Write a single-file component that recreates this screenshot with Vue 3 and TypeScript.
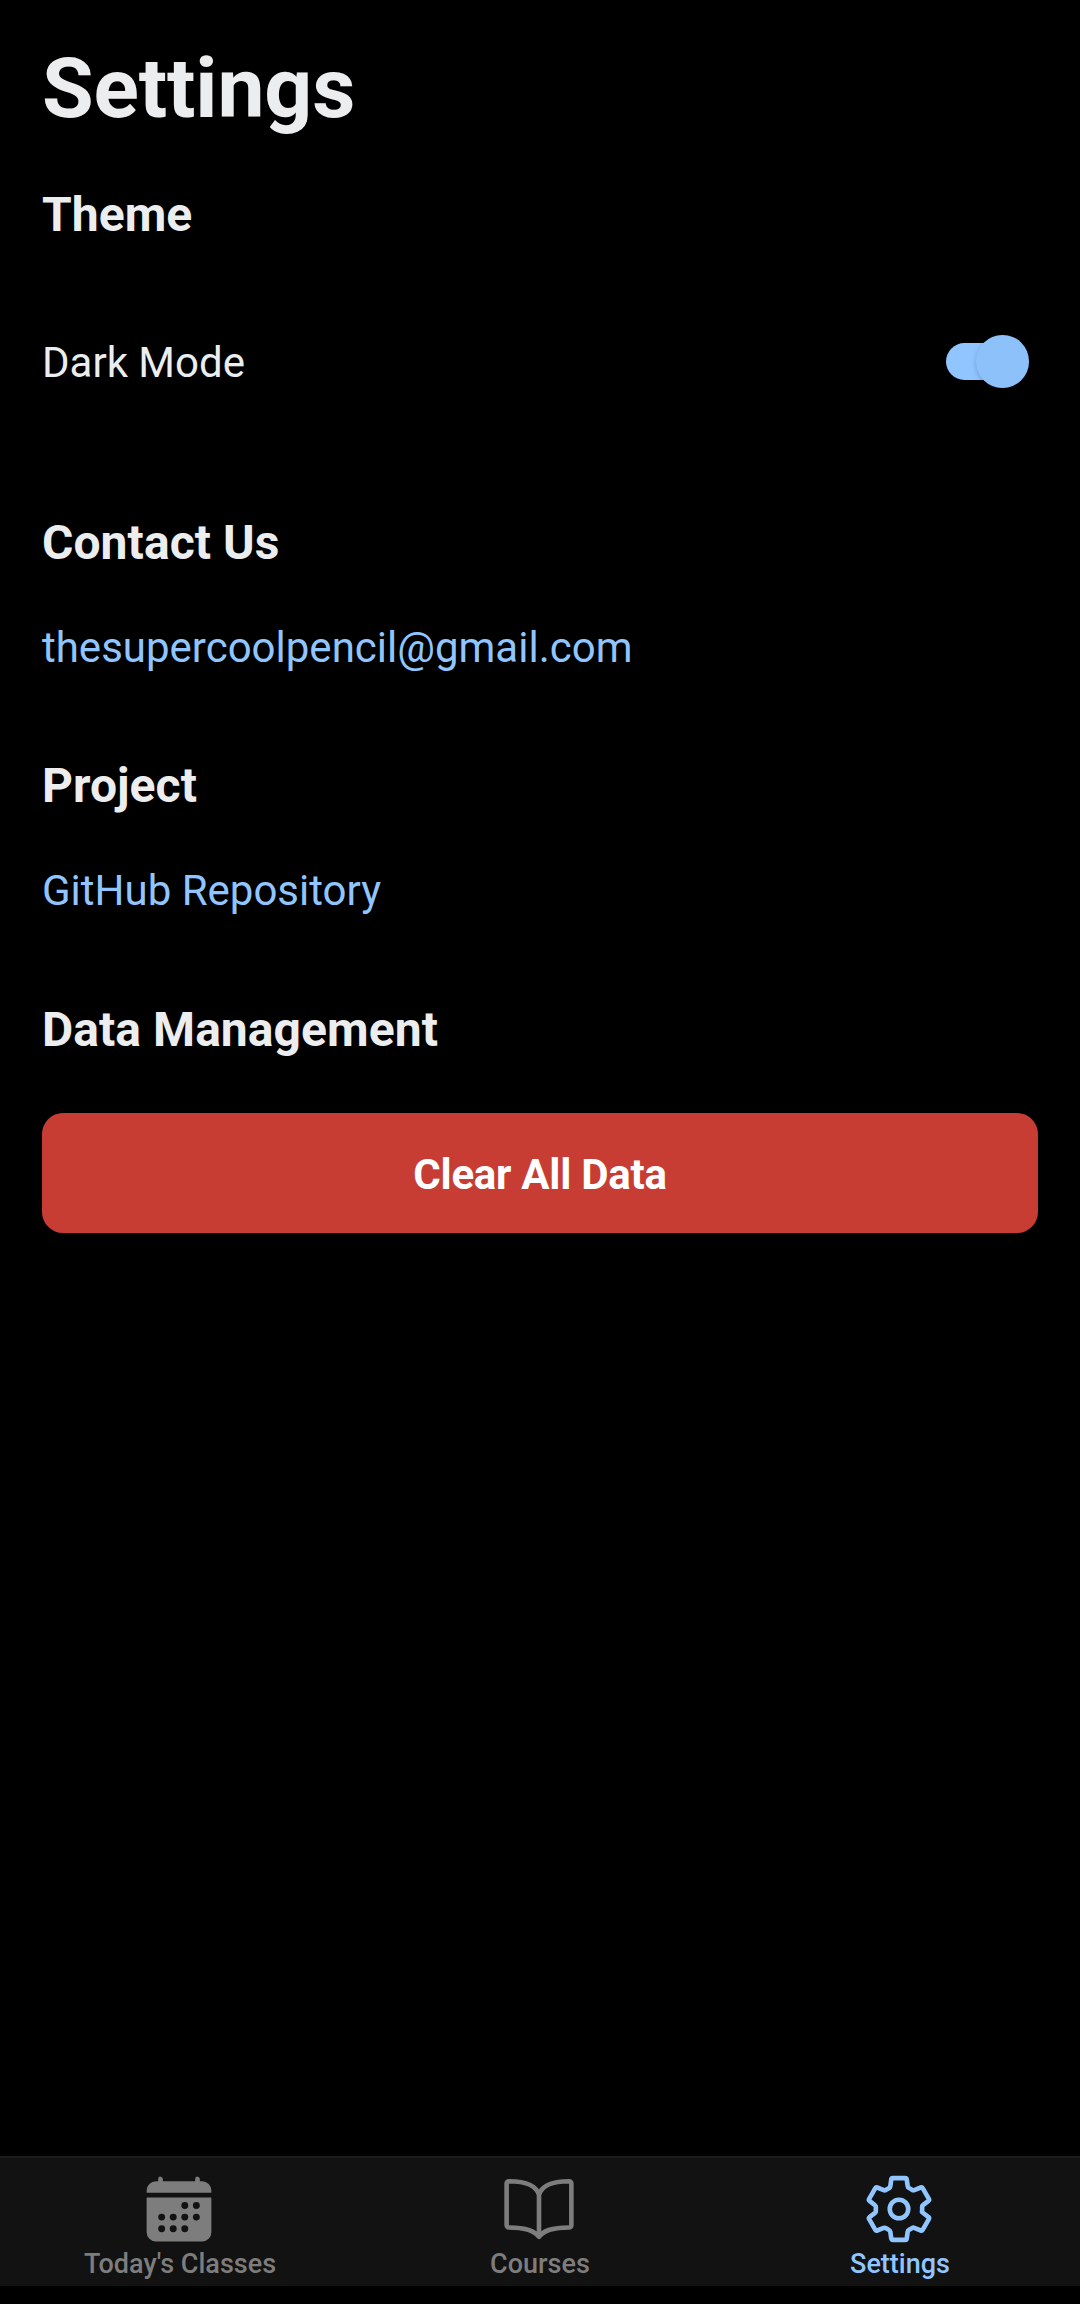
<script setup lang="ts">
import { ref } from 'vue'

type TabId = 'today' | 'courses' | 'settings'

const darkMode = ref<boolean>(true)
const activeTab = ref<TabId>('settings')
const tabs: { id: TabId; label: string }[] = [
  { id: 'today', label: "Today's Classes" },
  { id: 'courses', label: 'Courses' },
  { id: 'settings', label: 'Settings' },
]
</script>

<template>
  <div class="app">
    <main class="content">
      <h1 class="title">Settings</h1>

      <section class="section theme">
        <h2 class="heading">Theme</h2>
        <div class="row">
          <span class="text">Dark Mode</span>
          <button
            class="switch"
            :class="{ on: darkMode }"
            role="switch"
            :aria-checked="darkMode"
            aria-label="Dark Mode"
            @click="darkMode = !darkMode"
          >
            <span class="thumb"></span>
          </button>
        </div>
      </section>

      <section class="section contact">
        <h2 class="heading">Contact Us</h2>
        <a class="text link">thesupercoolpencil@gmail.com</a>
      </section>

      <section class="section project">
        <h2 class="heading">Project</h2>
        <a class="text link">GitHub Repository</a>
      </section>

      <section class="section data">
        <h2 class="heading">Data Management</h2>
        <button class="clear">Clear All Data</button>
      </section>
    </main>

    <nav class="tabs">
      <button
        v-for="tab in tabs"
        :key="tab.id"
        class="tab"
        :class="{ active: tab.id === activeTab }"
        @click="activeTab = tab.id"
      >
        <svg v-if="tab.id === 'today'" class="icon" viewBox="0 0 512 512" fill="currentColor">
          <path d="M480 128a64 64 0 0 0-64-64h-16V48.45c0-8.61-6.62-16-15.23-16.43A16 16 0 0 0 368 48v16H144V48.45c0-8.61-6.62-16-15.23-16.43A16 16 0 0 0 112 48v16H96a64 64 0 0 0-64 64v12a4 4 0 0 0 4 4h440a4 4 0 0 0 4-4z" />
          <path
            fill-rule="evenodd"
            d="M32 416a64 64 0 0 0 64 64h320a64 64 0 0 0 64-64V179a3 3 0 0 0-3-3H35a3 3 0 0 0-3 3zM376 208a24 24 0 1 1 0 48 24 24 0 0 1 0-48zM296 208a24 24 0 1 1 0 48 24 24 0 0 1 0-48zM376 288a24 24 0 1 1 0 48 24 24 0 0 1 0-48zM296 288a24 24 0 1 1 0 48 24 24 0 0 1 0-48zM216 288a24 24 0 1 1 0 48 24 24 0 0 1 0-48zM136 288a24 24 0 1 1 0 48 24 24 0 0 1 0-48zM296 368a24 24 0 1 1 0 48 24 24 0 0 1 0-48zM216 368a24 24 0 1 1 0 48 24 24 0 0 1 0-48zM136 368a24 24 0 1 1 0 48 24 24 0 0 1 0-48z"
          />
        </svg>
        <svg v-else-if="tab.id === 'courses'" class="icon line" viewBox="0 0 512 512">
          <path d="M256 160c16-63.16 76.43-95.41 208-96a15.94 15.94 0 0 1 16 16v288a16 16 0 0 1-16 16c-128 0-177.45 25.81-208 64-30.37-38-80-64-208-64-9.88 0-16-8.05-16-17.93V80a15.94 15.94 0 0 1 16-16c131.57.59 192 32.84 208 96zM256 160v288" />
        </svg>
        <svg v-else class="icon line" viewBox="0 0 512 512">
          <circle cx="256" cy="256" r="64" />
          <path d="M416.39 256a154.34 154.34 0 0 1-1.53 20.79l45.21 35.46a10.81 10.81 0 0 1 2.45 13.75l-42.77 74a10.81 10.81 0 0 1-13.14 4.59l-44.9-18.08a16.11 16.11 0 0 0-15.17 1.75A164.48 164.48 0 0 1 325 400.8a15.94 15.94 0 0 0-8.82 12.14l-6.73 47.89a11.08 11.08 0 0 1-10.68 9.17h-85.54a11.11 11.11 0 0 1-10.69-8.87l-6.72-47.82a16.07 16.07 0 0 0-9-12.22 155.3 155.3 0 0 1-21.46-12.57 16 16 0 0 0-15.11-1.71l-44.89 18.07a10.81 10.81 0 0 1-13.14-4.58l-42.77-74a10.8 10.8 0 0 1 2.45-13.75l38.21-30a16.05 16.05 0 0 0 6-14.08c-.36-4.17-.58-8.33-.58-12.5s.21-8.27.58-12.35a16 16 0 0 0-6.07-13.94l-38.19-30A10.81 10.81 0 0 1 49.48 186l42.77-74a10.81 10.81 0 0 1 13.14-4.59l44.9 18.08a16.11 16.11 0 0 0 15.17-1.75A164.48 164.48 0 0 1 187 111.2a15.94 15.94 0 0 0 8.82-12.14l6.73-47.89A11.08 11.08 0 0 1 213.23 42h85.54a11.11 11.11 0 0 1 10.69 8.87l6.72 47.82a16.07 16.07 0 0 0 9 12.22 155.3 155.3 0 0 1 21.46 12.57 16 16 0 0 0 15.11 1.71l44.89-18.07a10.81 10.81 0 0 1 13.14 4.58l42.77 74a10.8 10.8 0 0 1-2.45 13.75l-38.21 30a16.05 16.05 0 0 0-6.05 14.08c.33 4.14.55 8.3.55 12.47z" />
        </svg>
        <span class="label">{{ tab.label }}</span>
      </button>
    </nav>
  </div>
</template>

<style>
body {
  margin: 0;
  background: #000;
}
</style>

<style scoped>
.app {
  display: flex;
  flex-direction: column;
  box-sizing: border-box;
  width: 1080px;
  height: 2304px;
  padding-bottom: 18px;
  background: #000;
  color: #ecedee;
  font-family: Roboto, sans-serif;
}
button {
  padding: 0;
  border: 0;
  background: none;
  font-family: inherit;
}
.content {
  flex: 1;
  padding: 40px 42px 0;
}
.title {
  margin: 0;
  font-size: 84px;
  line-height: 98px;
  font-weight: 700;
  letter-spacing: -0.15px;
}
.section {
  display: flex;
  flex-direction: column;
}
.theme { margin-top: 49px; }
.contact { margin-top: 127px; }
.project { margin-top: 85px; }
.data { margin-top: 86px; }
.heading {
  margin: 0;
  font-size: 48px;
  line-height: 56px;
  font-weight: 700;
  letter-spacing: 0.06px;
}
.row {
  display: flex;
  align-items: center;
  justify-content: space-between;
  height: 50px;
  margin-top: 95px;
}
.text {
  font-size: 42px;
  line-height: 50px;
}
.link {
  margin-top: 52px;
  color: #90c5ff;
}
.switch {
  display: flex;
  align-items: center;
  box-sizing: border-box;
  width: 82px;
  height: 37px;
  margin: 0 10px 3px 0;
  border-radius: 19px;
  background: #555;
}
.switch.on {
  justify-content: flex-end;
  background: #90c5ff;
}
.thumb {
  width: 52.5px;
  height: 52.5px;
  flex: none;
  margin-right: -0.5px;
  border-radius: 50%;
  background: #8cc1fa;
  box-shadow: 0 2px 5px rgba(0, 0, 0, 0.2);
}
.clear {
  height: 120px;
  margin-top: 55px;
  padding-top: 4px;
  border-radius: 21px;
  background: #c73d33;
  color: #fff;
  font-size: 42px;
  line-height: 50px;
  font-weight: 700;
  letter-spacing: -0.25px;
}
.tabs {
  display: flex;
  box-sizing: border-box;
  height: 130px;
  border-top: 2px solid #1c1c1d;
  background: #121212;
}
.tab {
  display: flex;
  flex: 1;
  flex-direction: column;
  align-items: center;
  padding-top: 14px;
  color: #7d7d7d;
}
.tab.active {
  color: #90c5ff;
}
.icon {
  display: block;
  width: 74px;
  height: 74px;
  margin-right: 2px;
}
.line {
  fill: none;
  stroke: currentColor;
  stroke-width: 32;
  stroke-linecap: round;
  stroke-linejoin: round;
}
.label {
  margin-top: 3px;
  font-size: 27px;
  line-height: 31px;
  font-weight: 500;
}
</style>
